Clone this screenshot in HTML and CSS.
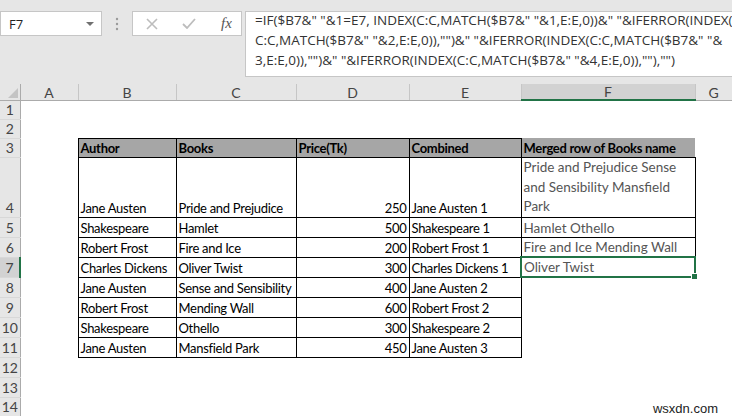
FILE: index.html
```html
<!DOCTYPE html>
<html lang="en">
<head>
    <meta charset="UTF-8">
    <title>Merged row of Books name</title>
    <link rel="stylesheet" href="styles.css">
</head>
<body>

<div class="app">
    <div class="toolbar">
        <div class="namebox">
            <span>F7</span>
            <span class="caret"></span>
        </div>
        <div class="grip">
            <svg width="4" height="14" viewBox="0 0 4 14"><circle cx="2" cy="2" r="1.2" fill="#9a9a9a"/><circle cx="2" cy="7" r="1.2" fill="#9a9a9a"/><circle cx="2" cy="12" r="1.2" fill="#9a9a9a"/></svg>
        </div>
        <div class="fxbox">
            <svg class="fx-icon" width="12" height="12" viewBox="0 0 12 12"><path d="M1 1L11 11M11 1L1 11" stroke="#bdbdbd" stroke-width="1.6" fill="none"/></svg>
            <svg class="fx-icon" width="14" height="11" viewBox="0 0 14 11"><path d="M1 6L5 10L13 1" stroke="#bdbdbd" stroke-width="1.8" fill="none"/></svg>
            <span class="fx-label">fx</span>
        </div>
        <div class="formula">
            <div class="line">=IF($B7&amp;" "&amp;1=E7, INDEX(C:C,MATCH($B7&amp;" "&amp;1,E:E,0))&amp;" "&amp;IFERROR(INDEX(</div>
            <div class="line">C:C,MATCH($B7&amp;" "&amp;2,E:E,0)),"")&amp;" "&amp;IFERROR(INDEX(C:C,MATCH($B7&amp;" "&amp;</div>
            <div class="line">3,E:E,0)),"")&amp;" "&amp;IFERROR(INDEX(C:C,MATCH($B7&amp;" "&amp;4,E:E,0)),""),"")</div>
        </div>
    </div>

    <table class="sheet">
        <colgroup>
            <col class="c-row">
            <col class="c-a">
            <col class="c-b">
            <col class="c-c">
            <col class="c-d">
            <col class="c-e">
            <col class="c-f">
            <col class="c-g">
        </colgroup>
        <tr class="r-head">
            <th class="corner"><svg width="10" height="10" viewBox="0 0 10 10"><path d="M10 0V10H0Z" fill="#c4c4c4"/></svg></th>
            <th class="col">A</th>
            <th class="col">B</th>
            <th class="col">C</th>
            <th class="col">D</th>
            <th class="col">E</th>
            <th class="col active">F</th>
            <th class="col">G</th>
        </tr>
        <tr class="r-18"><th class="row">1</th><td></td><td></td><td></td><td></td><td></td><td></td><td></td></tr>
        <tr class="r-18"><th class="row">2</th><td></td><td></td><td></td><td></td><td></td><td></td><td></td></tr>
        <tr class="r-18">
            <th class="row">3</th><td></td>
            <td class="cell hd first">Author</td>
            <td class="cell hd">Books</td>
            <td class="cell hd">Price(Tk)</td>
            <td class="cell hd">Combined</td>
            <td class="hd merged-hd">Merged row of Books name</td>
            <td></td>
        </tr>
        <tr class="r-60">
            <th class="row">4</th><td></td>
            <td class="cell first">Jane Austen</td>
            <td class="cell">Pride and Prejudice</td>
            <td class="cell num">250</td>
            <td class="cell">Jane Austen 1</td>
            <td class="cell merged wrap">Pride and Prejudice Sense<br>and Sensibility Mansfield<br>Park</td>
            <td></td>
        </tr>
        <tr class="r-20">
            <th class="row">5</th><td></td>
            <td class="cell first">Shakespeare</td>
            <td class="cell">Hamlet</td>
            <td class="cell num">500</td>
            <td class="cell">Shakespeare 1</td>
            <td class="cell merged">Hamlet Othello</td>
            <td></td>
        </tr>
        <tr class="r-20">
            <th class="row">6</th><td></td>
            <td class="cell first">Robert Frost</td>
            <td class="cell">Fire and Ice</td>
            <td class="cell num">200</td>
            <td class="cell">Robert Frost 1</td>
            <td class="cell merged">Fire and Ice Mending Wall</td>
            <td></td>
        </tr>
        <tr class="r-20">
            <th class="row active">7</th><td></td>
            <td class="cell first">Charles Dickens</td>
            <td class="cell">Oliver Twist</td>
            <td class="cell num">300</td>
            <td class="cell keep">Charles Dickens  1</td>
            <td class="merged selected">Oliver Twist</td>
            <td></td>
        </tr>
        <tr class="r-20">
            <th class="row">8</th><td></td>
            <td class="cell first">Jane Austen</td>
            <td class="cell">Sense and Sensibility</td>
            <td class="cell num">400</td>
            <td class="cell">Jane Austen 2</td>
            <td></td><td></td>
        </tr>
        <tr class="r-20">
            <th class="row">9</th><td></td>
            <td class="cell first">Robert Frost</td>
            <td class="cell">Mending Wall</td>
            <td class="cell num">600</td>
            <td class="cell">Robert Frost 2</td>
            <td></td><td></td>
        </tr>
        <tr class="r-20">
            <th class="row">10</th><td></td>
            <td class="cell first">Shakespeare</td>
            <td class="cell">Othello</td>
            <td class="cell num">300</td>
            <td class="cell">Shakespeare 2</td>
            <td></td><td></td>
        </tr>
        <tr class="r-20">
            <th class="row">11</th><td></td>
            <td class="cell first">Jane Austen</td>
            <td class="cell">Mansfield Park</td>
            <td class="cell num">450</td>
            <td class="cell">Jane Austen 3</td>
            <td></td><td></td>
        </tr>
        <tr class="r-20"><th class="row">12</th><td></td><td></td><td></td><td></td><td></td><td></td><td></td></tr>
        <tr class="r-20"><th class="row">13</th><td></td><td></td><td></td><td></td><td></td><td></td><td></td></tr>
        <tr class="r-16">
            <th class="row">14</th><td></td><td></td><td></td><td></td><td></td>
            <td class="watermark" colspan="2">wsxdn.com</td>
        </tr>
    </table>

    <div class="hscroll"></div>
</div>

</body>
</html>
```

FILE: styles.css
```css
body {
    margin: 0;
    background-color: #ffffff;
    font-family: Lato, "Noto Sans", sans-serif;
}
.app {
    width: 732px;
    height: 416px;
    overflow: hidden;
}

/* formula bar strip */
.toolbar {
    display: flex;
    align-items: flex-start;
    height: 84px;
    box-sizing: border-box;
    padding-top: 11px;
    background-color: #e6e6e6;
}
.namebox {
    display: flex;
    align-items: center;
    justify-content: space-between;
    width: 102px;
    height: 25px;
    box-sizing: border-box;
    padding: 0 7px 0 8px;
    background-color: #ffffff;
    border: 1px solid #c6c6c6;
    font-family: "Open Sans", sans-serif;
    font-size: 13px;
    color: #222222;
}
.caret {
    width: 0;
    height: 0;
    border-left: 4px solid transparent;
    border-right: 4px solid transparent;
    border-top: 4px solid #707070;
}
.grip {
    display: flex;
    justify-content: center;
    width: 30px;
    padding-top: 6px;
}
.fxbox {
    display: flex;
    align-items: center;
    width: 110px;
    height: 25px;
    box-sizing: border-box;
    padding-left: 13px;
    gap: 24px;
    background-color: #ffffff;
    border: 1px solid #c6c6c6;
}
.fx-label {
    font-family: "Liberation Serif", serif;
    font-style: italic;
    font-size: 15px;
    color: #555555;
    margin-left: 1px;
}
.formula {
    flex: 1;
    height: 66px;
    margin-left: 3px;
    margin-right: -2px;
    box-sizing: border-box;
    padding: 0 0 0 9px;
    background-color: #ffffff;
    border: 1px solid #c6c6c6;
    font-family: "Open Sans", sans-serif;
    font-size: 13.5px;
    line-height: 20px;
    color: #333333;
    overflow: hidden;
}
.formula .line {
    white-space: nowrap;
}
.formula .line:first-child {
    margin-top: -2px;
}

/* worksheet grid */
.sheet {
    border-collapse: collapse;
    table-layout: fixed;
    width: 732px;
    font-size: 13px;
    color: #000000;
}
.c-row { width: 20px; }
.c-a { width: 58px; }
.c-b { width: 98px; }
.c-c { width: 120px; }
.c-d { width: 113px; }
.c-e { width: 112px; }
.c-f { width: 174px; }
.c-g { width: 37px; }

.r-head { height: 16px; }
.r-16 { height: 16px; }
.r-18 { height: 18px; }
.r-20 { height: 20px; }
.r-60 { height: 60px; }

.sheet th {
    padding: 0;
    font-weight: normal;
    font-size: 14px;
    color: #444444;
    background-color: #e6e6e6;
}
.sheet th.corner {
    text-align: right;
    vertical-align: bottom;
    padding: 0 2px 2px 0;
    border-right: 1px solid #ababab;
    border-bottom: 1px solid #ababab;
    line-height: 0;
}
.sheet th.col {
    border-right: 1px solid #c6c6c6;
    border-bottom: 1px solid #ababab;
    line-height: 15px;
    vertical-align: bottom;
}
.sheet th.col.active {
    background-color: #d2d2d2;
    border-bottom: 2px solid #217346;
}
.sheet th.row {
    border-right: 1px solid #ababab;
    border-bottom: 1px solid #d8d8d8;
    vertical-align: bottom;
    line-height: 18px;
}
.sheet th.row.active {
    background-color: #d2d2d2;
    border-right: 2px solid #217346;
}

.sheet td {
    padding: 0 2px;
    vertical-align: bottom;
    line-height: 18px;
    letter-spacing: -0.3px;
    white-space: nowrap;
    overflow: hidden;
}
.cell {
    border-right: 1px solid #000000;
    border-bottom: 1px solid #000000;
}
.cell.first {
    border-left: 1px solid #000000;
}
.hd {
    font-weight: bold;
    background-color: #a6a6a6;
    border-top: 1px solid #000000;
}
.merged-hd {
    border-top: none;
    border-bottom: 1px solid #000000;
}
.num {
    text-align: right;
}
.keep {
    white-space: pre;
}
.sheet td.merged {
    font-size: 13.5px;
    letter-spacing: 0;
    color: #555555;
}
.sheet td.wrap {
    line-height: 19.5px;
}
.sheet td.selected {
    position: relative;
    overflow: visible;
    border: 2px solid #217346;
}
.selected::after {
    content: "";
    position: absolute;
    right: -4px;
    bottom: -4px;
    width: 5px;
    height: 5px;
    background-color: #217346;
    border: 1px solid #ffffff;
}
.sheet td.watermark {
    text-align: right;
    padding-right: 14px;
    font-family: "Liberation Sans", Arial, sans-serif;
    font-size: 13px;
    line-height: 14px;
    letter-spacing: 0;
    color: #222222;
}

.hscroll {
    height: 4px;
    background-color: #bdbdbd;
}
```
